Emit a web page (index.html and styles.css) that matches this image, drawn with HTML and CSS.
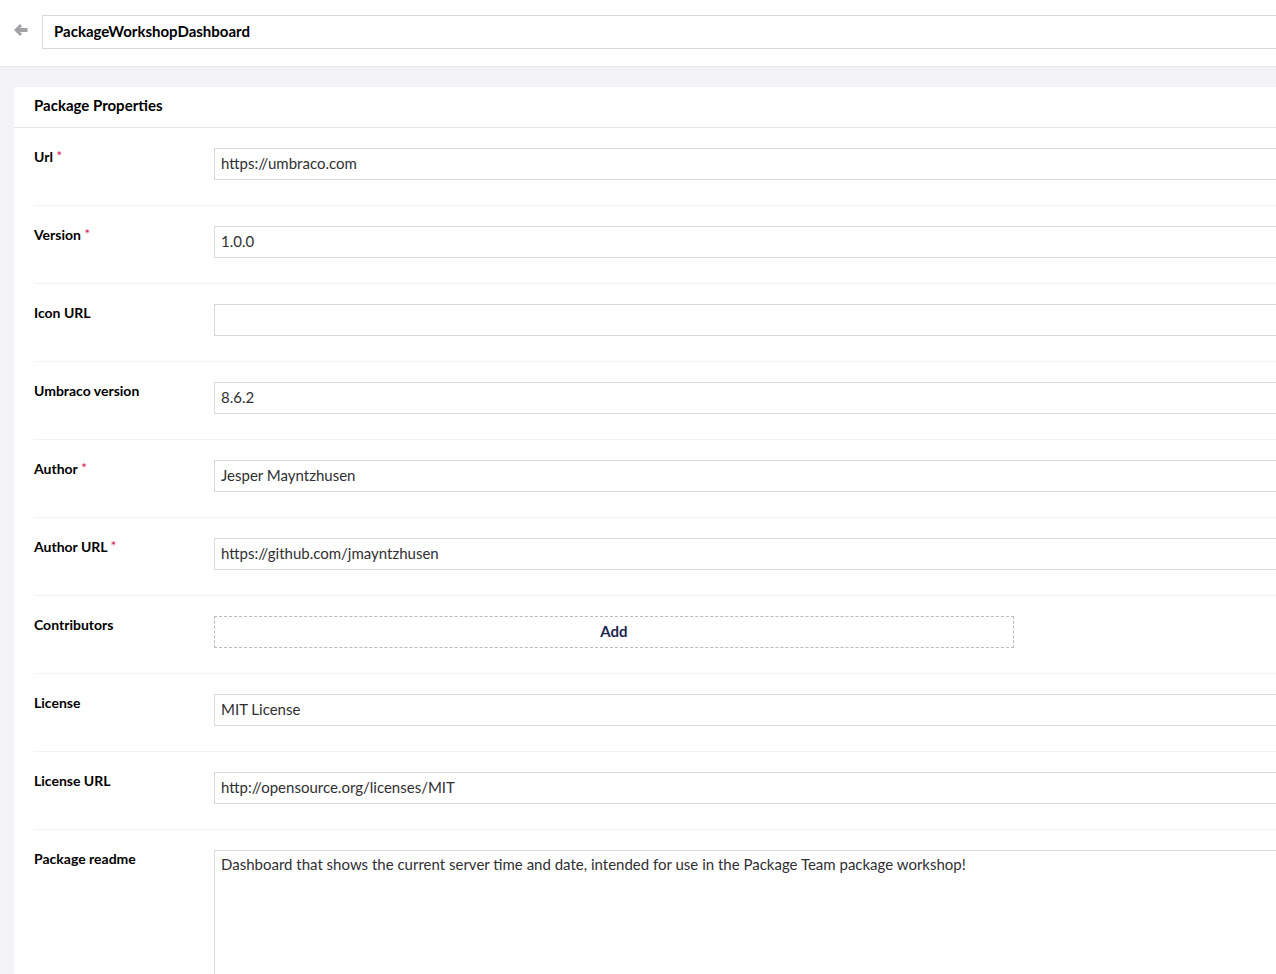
FILE: index.html
```html
<!DOCTYPE html>
<html lang="en">

<head>
    <meta charset="UTF-8">
    <meta name="viewport" content="width=device-width, initial-scale=1.0">
    <title>Package Properties</title>
    <link rel="stylesheet" href="styles.css">
</head>

<body>
    <div class="editor-header">
        <a class="back-link" href="#">
            <svg width="14" height="12" viewBox="0 0 14 12">
                <path d="M6 0 L0 6 L6 12 L8.2 9.8 L6 8 H13.5 V4 H6 L8.2 2.2 Z" fill="#a2a1a6" />
            </svg>
        </a>
        <input class="name-input" type="text" value="PackageWorkshopDashboard">
    </div>

    <div class="editor-body">
        <div class="panel">
            <div class="panel-header">Package Properties</div>

            <div class="prop-row">
                <label class="prop-label">Url <span class="req">*</span></label>
                <div class="prop-editor"><input type="text" value="https://umbraco.com"></div>
            </div>
            <div class="prop-row">
                <label class="prop-label">Version <span class="req">*</span></label>
                <div class="prop-editor"><input type="text" value="1.0.0"></div>
            </div>
            <div class="prop-row">
                <label class="prop-label">Icon URL</label>
                <div class="prop-editor"><input type="text" value=""></div>
            </div>
            <div class="prop-row">
                <label class="prop-label">Umbraco version</label>
                <div class="prop-editor"><input type="text" value="8.6.2"></div>
            </div>
            <div class="prop-row">
                <label class="prop-label">Author <span class="req">*</span></label>
                <div class="prop-editor"><input type="text" value="Jesper Mayntzhusen"></div>
            </div>
            <div class="prop-row">
                <label class="prop-label">Author URL <span class="req">*</span></label>
                <div class="prop-editor"><input type="text" value="https://github.com/jmayntzhusen"></div>
            </div>
            <div class="prop-row">
                <label class="prop-label">Contributors</label>
                <div class="prop-editor"><button class="add-btn" type="button">Add</button></div>
            </div>
            <div class="prop-row">
                <label class="prop-label">License</label>
                <div class="prop-editor"><input type="text" value="MIT License"></div>
            </div>
            <div class="prop-row">
                <label class="prop-label">License URL</label>
                <div class="prop-editor"><input type="text" value="http://opensource.org/licenses/MIT"></div>
            </div>
            <div class="prop-row">
                <label class="prop-label">Package readme</label>
                <div class="prop-editor"><textarea>Dashboard that shows the current server time and date, intended for use in the Package Team package workshop!</textarea></div>
            </div>
        </div>
    </div>
</body>

</html>
```

FILE: styles.css
```css
html,
body {
    margin: 0;
    overflow: hidden;
}

body {
    font-family: Lato, "Open Sans", sans-serif;
    background-color: #f3f3f5;
    color: #1b264f;
    width: 1330px;
}

.editor-header {
    display: flex;
    align-items: flex-start;
    height: 67px;
    background-color: #ffffff;
    border-bottom: 1px solid #e9e9eb;
    box-sizing: border-box;
    padding: 15px 0 0 14px;
}

.back-link {
    display: flex;
    align-items: center;
    width: 28px;
    height: 30px;
}

.name-input {
    flex: 1;
    height: 34px;
    padding: 0 11px 3px;
    border: 1px solid #d8d7d9;
    font-family: inherit;
    font-size: 15px;
    font-weight: 700;
    color: #000000;
    box-sizing: border-box;
    outline: none;
}

.editor-body {
    padding: 20px 0 0 14px;
}

.panel {
    background-color: #ffffff;
    box-shadow: 0 1px 1px rgba(0, 0, 0, 0.04);
    border-radius: 3px 0 0 0;
}

.panel-header {
    height: 41px;
    line-height: 36px;
    padding: 0 20px;
    border-bottom: 1px solid #e9e9eb;
    box-sizing: border-box;
    font-size: 15px;
    font-weight: 700;
    color: #000000;
}

.prop-row {
    display: flex;
    margin: 0 0 0 20px;
    padding: 20px 0 25px;
    border-bottom: 1px solid #f3f3f5;
}

.prop-label {
    width: 180px;
    flex-shrink: 0;
    font-size: 14px;
    font-weight: 700;
    color: #000000;
}

.req {
    color: #d42054;
    font-size: 14px;
    font-weight: 400;
    position: relative;
    top: -1px;
}

.prop-editor {
    flex: 1;
}

.prop-editor input,
.prop-editor textarea {
    display: block;
    width: 100%;
    height: 32px;
    padding: 0 6px 3px;
    border: 1px solid #d8d7d9;
    font-family: inherit;
    font-size: 15px;
    color: #303033;
    box-sizing: border-box;
    outline: none;
    margin: 0;
}

.prop-editor textarea {
    height: 240px;
    padding: 3px 6px;
    line-height: 20px;
    resize: none;
}

.add-btn {
    display: block;
    width: 800px;
    height: 32px;
    padding-bottom: 3px;
    background-color: #ffffff;
    border: 1px dashed #bbbabf;
    font-family: inherit;
    font-size: 15px;
    font-weight: 700;
    color: #1b264f;
    cursor: pointer;
}
```
